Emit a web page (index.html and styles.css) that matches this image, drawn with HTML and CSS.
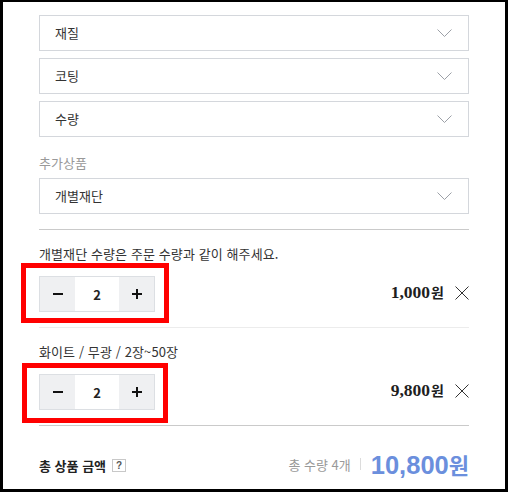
FILE: index.html
```html
<!DOCTYPE html>
<html lang="ko">
<head>
<meta charset="utf-8">
<title>옵션 선택</title>
<link rel="stylesheet" href="styles.css">
</head>
<body>
<div class="frame">
  <div class="options">
    <div class="select"><span>재질</span><svg class="chev" width="15" height="8" viewBox="0 0 15 8"><polyline points="0.5,0.5 7.5,7.5 14.5,0.5"/></svg></div>
    <div class="select"><span>코팅</span><svg class="chev" width="15" height="8" viewBox="0 0 15 8"><polyline points="0.5,0.5 7.5,7.5 14.5,0.5"/></svg></div>
    <div class="select"><span>수량</span><svg class="chev" width="15" height="8" viewBox="0 0 15 8"><polyline points="0.5,0.5 7.5,7.5 14.5,0.5"/></svg></div>
  </div>
  <div class="label">추가상품</div>
  <div class="select"><span>개별재단</span><svg class="chev" width="15" height="8" viewBox="0 0 15 8"><polyline points="0.5,0.5 7.5,7.5 14.5,0.5"/></svg></div>

  <div class="items">
    <div class="item">
      <div class="item-name">개별재단 수량은 주문 수량과 같이 해주세요.</div>
      <div class="item-row">
        <div class="stepper">
          <span class="step-btn"><svg width="10" height="10" viewBox="0 0 10 10"><rect x="0" y="4" width="10" height="2"/></svg></span>
          <span class="step-val">2</span>
          <span class="step-btn"><svg width="10" height="10" viewBox="0 0 10 10"><rect x="0" y="4" width="10" height="2"/><rect x="4" y="0" width="2" height="10"/></svg></span>
        </div>
        <div class="price">1,000<span class="won">원</span></div>
        <svg class="remove" width="14" height="14" viewBox="0 0 14 14"><path d="M0.5 0.5 L13.5 13.5 M13.5 0.5 L0.5 13.5"/></svg>
      </div>
      <div class="mark mark-a"></div>
    </div>
    <div class="item">
      <div class="item-name">화이트 / 무광 / 2장~50장</div>
      <div class="item-row">
        <div class="stepper">
          <span class="step-btn"><svg width="10" height="10" viewBox="0 0 10 10"><rect x="0" y="4" width="10" height="2"/></svg></span>
          <span class="step-val">2</span>
          <span class="step-btn"><svg width="10" height="10" viewBox="0 0 10 10"><rect x="0" y="4" width="10" height="2"/><rect x="4" y="0" width="2" height="10"/></svg></span>
        </div>
        <div class="price">9,800<span class="won">원</span></div>
        <svg class="remove" width="14" height="14" viewBox="0 0 14 14"><path d="M0.5 0.5 L13.5 13.5 M13.5 0.5 L0.5 13.5"/></svg>
      </div>
      <div class="mark mark-b"></div>
    </div>
  </div>

  <div class="total">
    <span class="total-label">총 상품 금액</span>
    <span class="help">?</span>
    <div class="total-right">
      <span class="total-count">총 수량 4개</span>
      <span class="divider"></span>
      <span class="total-price">10,800<span class="total-won">원</span></span>
    </div>
  </div>
</div>
</body>
</html>
```

FILE: styles.css
```css
html, body {
  margin: 0;
  padding: 0;
  background: #fff;
}

.frame {
  width: 508px;
  height: 492px;
  box-sizing: border-box;
  border: 3px solid #000;
  border-top-width: 2px;
  padding: 13px 36px 0;
  font-family: "Noto Sans CJK KR", "Noto Sans", sans-serif;
  color: #333;
  overflow: hidden;
}

.options {
  display: flex;
  flex-direction: column;
  gap: 7px;
}

.select {
  height: 36px;
  box-sizing: border-box;
  border: 1px solid #d4d7dc;
  display: flex;
  align-items: center;
  justify-content: space-between;
  padding: 0 16px 0 15px;
  font-size: 13px;
  line-height: 20px;
  color: #333;
}

.chev polyline {
  fill: none;
  stroke: #9ca0a7;
  stroke-width: 1;
}

.label {
  margin-top: 16px;
  margin-bottom: 5px;
  line-height: 20px;
  font-size: 13px;
  color: #999;
}

.items {
  margin-top: 15px;
  border-top: 1px solid #cacaca;
}

.item {
  position: relative;
  padding: 14px 0 15px;
  border-bottom: 1px solid #ececec;
}

.item:last-child {
  border-bottom-color: #cacaca;
}

.item-name {
  line-height: 20px;
  font-size: 13px;
  letter-spacing: 0.1px;
  color: #333;
}

.item-row {
  margin-top: 12px;
  display: flex;
  align-items: center;
}

.stepper {
  display: flex;
  height: 36px;
  box-sizing: border-box;
  border: 1px solid #dcdfe3;
}

.step-btn {
  width: 35px;
  background: #eff0f2;
  display: flex;
  align-items: center;
  justify-content: center;
}

.step-btn svg rect {
  fill: #111;
}

.step-val {
  width: 44px;
  display: flex;
  align-items: center;
  justify-content: center;
  font-size: 13px;
  font-weight: 700;
  color: #222;
  background: #fff;
}

.price {
  margin-left: auto;
  font-family: "Liberation Serif", serif;
  font-weight: 700;
  font-size: 17.5px;
  color: #1e1e1e;
  margin-top: -3px;
}

.won {
  font-family: "Noto Sans CJK KR", sans-serif;
  font-size: 14px;
  font-weight: 700;
  margin-left: 1px;
}

.remove {
  margin-left: 11px;
  margin-top: -3px;
}

.remove path {
  fill: none;
  stroke: #333;
  stroke-width: 1;
}

.mark {
  position: absolute;
  box-sizing: border-box;
  border: 5px solid #ff0000;
  height: 60px;
}

.mark-a {
  left: -18px;
  top: 33px;
  width: 148px;
}

.mark-b {
  left: -17px;
  top: 35px;
  width: 146px;
}

.total {
  display: flex;
  align-items: center;
  height: 30px;
  margin-top: 23px;
}

.total-label {
  font-size: 13px;
  font-weight: 700;
  color: #222;
  margin-top: 3px;
}

.help {
  margin-left: 6px;
  margin-top: 3px;
  width: 14px;
  height: 13px;
  box-sizing: border-box;
  border: 1px solid #c8c8c8;
  display: flex;
  align-items: center;
  justify-content: center;
  font-family: "Liberation Sans", sans-serif;
  font-size: 10px;
  font-weight: 700;
  color: #555;
}

.total-right {
  margin-left: auto;
  display: flex;
  align-items: center;
}

.total-count {
  font-size: 13px;
  color: #999;
}

.divider {
  width: 1px;
  height: 12px;
  background: #dcdcdc;
  margin: 0 10px 0 9px;
}

.total-price {
  font-family: "Liberation Sans", sans-serif;
  font-weight: 700;
  font-size: 25.5px;
  color: #6b8fdd;
  line-height: 30px;
}

.total-won {
  font-family: "Noto Sans CJK KR", sans-serif;
  font-size: 22px;
  font-weight: 700;
}
```
